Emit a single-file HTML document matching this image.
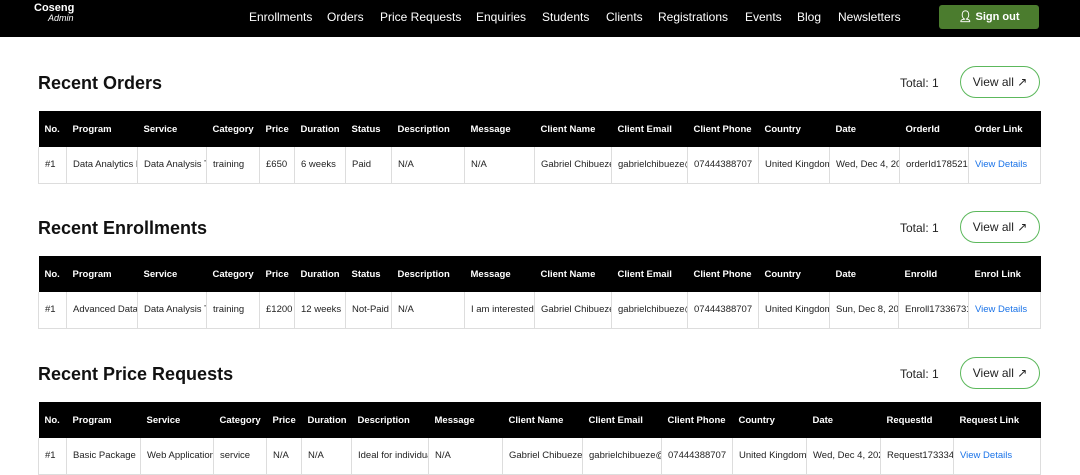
<!DOCTYPE html>
<html><head><meta charset="utf-8"><style>
*{box-sizing:border-box;margin:0;padding:0}
body{width:1080px;height:460px;overflow:hidden;background:#fff;font-family:"Liberation Sans",Arial,sans-serif;color:#222}
.nav{position:absolute;left:0;top:0;width:1080px;height:37px;background:#000}
.logo{position:absolute;left:34px;top:3px;color:#fff;font-weight:bold;font-size:11px;line-height:10px}
.logo i{display:block;font-weight:normal;font-size:9px;margin-left:14px}
.nav a{position:absolute;top:10px;color:#fff;font-size:12px;text-decoration:none}
.so{position:absolute;left:939px;top:5px;width:100px;height:24px;background:#4b7c2e;border-radius:3px;color:#fff;font-size:11px;font-weight:bold;text-align:center;line-height:24px}
.sec{position:absolute;left:38px;width:1002px}
h2{position:absolute;left:0;top:0;font-size:18px;font-weight:bold;color:#111}
.tot{position:absolute;left:862px;top:3px;font-size:12px}
.va{position:absolute;left:922px;top:-7px;width:80px;height:32px;border:1px solid #5cb85c;border-radius:16px;font-size:12px;text-align:center;line-height:30px}
table{position:absolute;left:0;top:38px;width:1002px;border-collapse:collapse;table-layout:fixed;font-size:9.5px}
th{background:#000;color:#fff;height:36px;text-align:left;padding-left:6px;font-weight:bold;white-space:nowrap;overflow:hidden}
td{height:36px;padding-left:6px;white-space:nowrap;overflow:hidden;border:1px solid #ddd;border-top:none}
td a{color:#1a73e8;text-decoration:none}
</style></head><body>
<div class="nav">
<div class="logo">Coseng<i>Admin</i></div>
<a style="left:249px">Enrollments</a><a style="left:327px">Orders</a><a style="left:380px">Price Requests</a><a style="left:476px">Enquiries</a><a style="left:542px">Students</a><a style="left:606px">Clients</a><a style="left:658px">Registrations</a><a style="left:745px">Events</a><a style="left:797px">Blog</a><a style="left:838px">Newsletters</a>
<div class="so">&#128100;&#xFE0E; Sign out</div>
</div>

<div class="sec" style="top:73px">
<h2>Recent Orders</h2><div class="tot">Total: 1</div><div class="va">View all ↗</div>
<table><colgroup><col width="28"><col width="71"><col width="69"><col width="53"><col width="35"><col width="51"><col width="46"><col width="73"><col width="70"><col width="77"><col width="76"><col width="71"><col width="71"><col width="70"><col width="69"><col width="72"></colgroup>
<tr><th>No.</th><th>Program</th><th>Service</th><th>Category</th><th>Price</th><th>Duration</th><th>Status</th><th>Description</th><th>Message</th><th>Client Name</th><th>Client Email</th><th>Client Phone</th><th>Country</th><th>Date</th><th>OrderId</th><th>Order Link</th></tr>
<tr><td>#1</td><td>Data Analytics Program</td><td>Data Analysis Training</td><td>training</td><td>£650</td><td>6 weeks</td><td>Paid</td><td>N/A</td><td>N/A</td><td>Gabriel Chibueze</td><td>gabrielchibueze@gmail.com</td><td>07444388707</td><td>United Kingdom</td><td>Wed, Dec 4, 2024</td><td>orderId17852141</td><td><a>View Details</a></td></tr>
</table></div>

<div class="sec" style="top:218px">
<h2>Recent Enrollments</h2><div class="tot">Total: 1</div><div class="va">View all ↗</div>
<table><colgroup><col width="28"><col width="71"><col width="69"><col width="53"><col width="35"><col width="51"><col width="46"><col width="73"><col width="70"><col width="77"><col width="76"><col width="71"><col width="71"><col width="69"><col width="70"><col width="72"></colgroup>
<tr><th>No.</th><th>Program</th><th>Service</th><th>Category</th><th>Price</th><th>Duration</th><th>Status</th><th>Description</th><th>Message</th><th>Client Name</th><th>Client Email</th><th>Client Phone</th><th>Country</th><th>Date</th><th>EnrolId</th><th>Enrol Link</th></tr>
<tr><td>#1</td><td>Advanced Data Analytics</td><td>Data Analysis Training</td><td>training</td><td>£1200</td><td>12 weeks</td><td>Not-Paid</td><td>N/A</td><td>I am interested</td><td>Gabriel Chibueze</td><td>gabrielchibueze@gmail.com</td><td>07444388707</td><td>United Kingdom</td><td>Sun, Dec 8, 2024</td><td>Enroll17336731</td><td><a>View Details</a></td></tr>
</table></div>

<div class="sec" style="top:364px">
<h2>Recent Price Requests</h2><div class="tot">Total: 1</div><div class="va">View all ↗</div>
<table><colgroup><col width="28"><col width="74"><col width="73"><col width="53"><col width="35"><col width="50"><col width="77"><col width="74"><col width="80"><col width="79"><col width="71"><col width="74"><col width="74"><col width="73"><col width="87"></colgroup>
<tr><th>No.</th><th>Program</th><th>Service</th><th>Category</th><th>Price</th><th>Duration</th><th>Description</th><th>Message</th><th>Client Name</th><th>Client Email</th><th>Client Phone</th><th>Country</th><th>Date</th><th>RequestId</th><th>Request Link</th></tr>
<tr><td>#1</td><td>Basic Package</td><td>Web Application</td><td>service</td><td>N/A</td><td>N/A</td><td>Ideal for individuals</td><td>N/A</td><td>Gabriel Chibueze</td><td>gabrielchibueze@gmail.com</td><td>07444388707</td><td>United Kingdom</td><td>Wed, Dec 4, 2024</td><td>Request17333421</td><td><a>View Details</a></td></tr>
</table></div>
</body></html>
